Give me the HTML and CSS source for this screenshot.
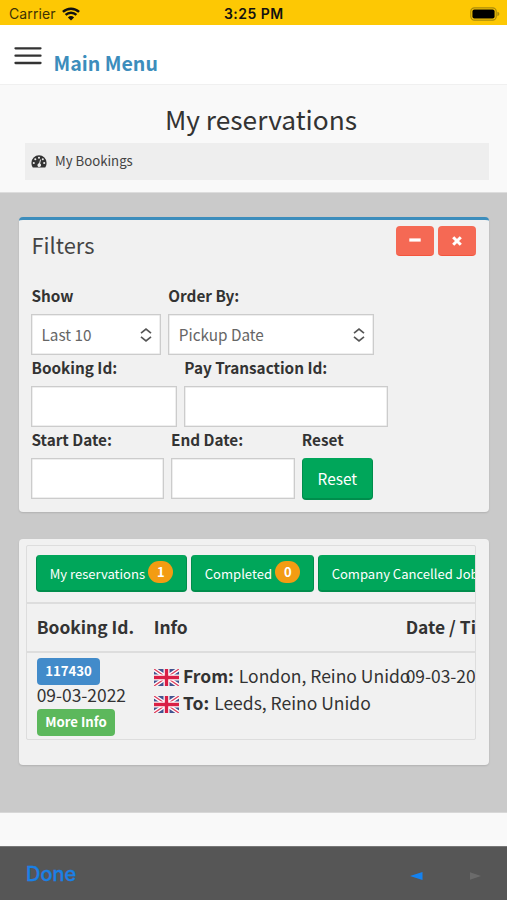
FILE: index.html
```html
<!DOCTYPE html>
<html lang="en">
<head>
<meta charset="utf-8">
<title>My reservations</title>
<link rel="stylesheet" href="styles.css">
</head>
<body>
<svg width="0" height="0" class="defs" aria-hidden="true">
  <symbol id="uk" viewBox="0 0 25 17">
    <path d="M0 0h25v17H0z" fill="#42538f"/>
    <path d="M0 0l25 17M25 0L0 17" stroke="#fff" stroke-width="4"/>
    <path d="M0 0l25 17M25 0L0 17" stroke="#df4562" stroke-width="1.4"/>
    <path d="M12.5 0v17M0 8.5h25" stroke="#fff" stroke-width="6"/>
    <path d="M12.5 0v17M0 8.5h25" stroke="#d91f45" stroke-width="3.4"/>
  </symbol>
  <symbol id="sort" viewBox="0 0 12 14">
    <path d="M1 5.2l5-4 5 4M1 8.8l5 4 5-4" fill="none" stroke="#555" stroke-width="1.7"/>
  </symbol>
</svg>
<div class="status">
  <span class="carrier">Carrier</span>
  <svg class="wifi" width="18" height="14" viewBox="0 0 18 14"><path d="M.9 4.900a11.800 11.800 0 0 1 16.200 0M3.600 7.900a7.800 7.800 0 0 1 10.800 0" fill="none" stroke="#111" stroke-width="2.400"/><path d="M9 13.600L5.900 10.400a4.600 4.600 0 0 1 6.200 0z" fill="#111"/></svg>
  <span class="clock">3:25 PM</span>
  <svg class="battery" width="30" height="14" viewBox="0 0 30 14"><rect x=".8" y=".8" width="25.4" height="12.4" rx="3.6" fill="none" stroke="#a98a0b" stroke-width="1.2"/><rect x="2.4" y="2.6" width="22.2" height="8.8" rx="2" fill="#000"/><path d="M27.4 4.8q2 .6 2 2.2t-2 2.2z" fill="#a98a0b"/></svg>
</div>
<header class="nav">
  <svg class="burger" width="28" height="20" viewBox="0 0 28 20"><path d="M1.5 3.300h25M1.500 10.700h25M1.500 18h25" stroke="#333" stroke-width="2.300" stroke-linecap="round"/></svg>
  <span class="brand">Main Menu</span>
</header>
<section class="heading">
  <h1>My reservations</h1>
  <div class="crumb">
    <svg width="16" height="13" viewBox="0 0 16 13"><path d="M8 .3A7.6 7.6 0 0 0 .4 7.9c0 1.6.4 2.9 1.1 4.1.2.4.4.5.8.5h11.4c.4 0 .6-.1.8-.5.7-1.2 1.1-2.500 1.100-4.100A7.600 7.600 0 0 0 8 .3z" fill="#333"/><g fill="#eee"><circle cx="2.800" cy="8" r="1.050"/><circle cx="4.300" cy="4.300" r="1.050"/><circle cx="8" cy="2.700" r="1.050"/><circle cx="11.800" cy="4.300" r="1.050"/><circle cx="13.200" cy="8" r="1.050"/><path d="M9.100 4.500l.9.250-.9 3.800a1.800 1.800 0 1 1-1-.2z"/></g></svg>
    <span>My Bookings</span>
  </div>
</section>
<main class="content">
  <section class="box filters">
    <div class="box-head">
      <h2>Filters</h2>
      <div class="tools">
        <button class="tool"><svg width="12" height="12" viewBox="0 0 12 12"><path d="M.3 5h11.400" stroke="#fff" stroke-width="3.200"/></svg></button>
        <button class="tool"><svg width="12" height="12" viewBox="0 0 12 12"><path d="M2.200 2.200l7.600 7.600M9.800 2.200L2.200 9.800" stroke="#fff" stroke-width="3"/></svg></button>
      </div>
    </div>
    <div class="row">
      <div class="field w-show"><label>Show</label><div class="control"><span>Last 10</span><svg width="12" height="14"><use href="#sort"/></svg></div></div>
      <div class="field w-order"><label>Order By:</label><div class="control"><span>Pickup Date</span><svg width="12" height="14"><use href="#sort"/></svg></div></div>
    </div>
    <div class="row">
      <div class="field w-booking"><label>Booking Id:</label><div class="control"></div></div>
      <div class="field w-pay"><label>Pay Transaction Id:</label><div class="control"></div></div>
    </div>
    <div class="row">
      <div class="field w-start"><label>Start Date:</label><div class="control"></div></div>
      <div class="field w-end"><label>End Date:</label><div class="control"></div></div>
      <div class="field w-reset"><label>Reset</label><button class="reset">Reset</button></div>
    </div>
  </section>
  <section class="box results">
    <div class="scroller">
      <div class="tabs">
        <button class="tab">My reservations <b>1</b></button>
        <button class="tab">Completed <b>0</b></button>
        <button class="tab">Company Cancelled Jobs <b>0</b></button>
      </div>
      <div class="grid thead">
        <span>Booking Id.</span><span>Info</span><span>Date / Time</span>
      </div>
      <div class="grid tbody">
        <div class="ids"><span class="label blue">117430</span><span class="date">09-03-2022</span><span class="label green">More Info</span></div>
        <div class="info">
          <div><svg width="25" height="17"><use href="#uk"/></svg><b>From:</b> London, Reino Unido</div>
          <div><svg width="25" height="17"><use href="#uk"/></svg><b>To:</b> Leeds, Reino Unido</div>
        </div>
        <div class="when">09-03-2022</div>
      </div>
    </div>
  </section>
</main>
<footer class="foot"></footer>
<div class="toolbar">
  <span class="done">Done</span>
  <svg class="prev" width="13" height="8" viewBox="0 0 13 8"><path d="M0 4L12.500 0v8z" fill="#1482f0"/></svg>
  <svg class="next" width="11" height="8" viewBox="0 0 11 8"><path d="M11 4L0 .3v7.400z" fill="#6b6b6b"/></svg>
</div>
</body>
</html>
```
FILE: styles.css
```css
* { box-sizing: border-box; }
body {
  margin: 0;
  width: 507px;
  height: 900px;
  overflow: hidden;
  display: flex;
  flex-direction: column;
  background: #f9f9f9;
  color: #333;
  font-family: "Noto Sans CJK JP", sans-serif;
}
h1, h2 { margin: 0; font-weight: 400; }
button { border: 0; padding: 0; font: inherit; color: #fff; display: flex; align-items: center; justify-content: center; }
.defs { position: absolute; }
.status {
  flex: none;
  height: 25px;
  padding: 2px 7px 0 9px;
  background: #fdc804;
  display: grid;
  grid-template-columns: 53px 18px 1fr 30px;
  align-items: center;
  font: 14px/20px Inter, sans-serif;
  color: #111;
}
.carrier { color: #3d3204; letter-spacing: .1px; }
.clock { font-weight: 600; padding-left: 144px; letter-spacing: .45px; }
.nav {
  flex: none;
  height: 60px;
  padding: 20px 0 0 14px;
  background: #fff;
  border-bottom: 1px solid #f0f0f0;
  display: flex;
  gap: 12px;
}
.brand { font-weight: 700; font-size: 19.6px; line-height: 24px; margin-top: 6px; margin-left: -.5px; color: #3c8dbc; }
.heading { flex: none; height: 108px; padding: 16px 18px 0 25px; border-bottom: 1px solid #ddd; }
h1 { font-size: 26.3px; line-height: 36px; text-align: center; padding-left: 8px; margin-bottom: 6px; }
.crumb { height: 37px; background: #eee; display: flex; align-items: center; gap: 8px; padding-left: 6px; font-size: 13.2px; color: #444; }
.crumb span { margin-top: -3px; }
.content { flex: none; height: 620px; background: #cacaca; padding: 24px 18px 0 19px; border-bottom: 1px solid #d8d8d8; }
.box { background: #f1f1f1; border-radius: 4px; box-shadow: 0 1px 2px rgba(0,0,0,.13); }
.filters { height: 295px; border-top: 3px solid #3c8dbc; padding: 0 13px 0 12px; }
.box-head { display: flex; justify-content: space-between; height: 66px; padding-top: 6px; }
h2 { font-size: 21.9px; line-height: 38px; color: #444; padding-left: .5px; }
.tools { display: flex; gap: 4px; }
.tool { width: 38px; height: 30px; background: #f56954; border-radius: 4px; border-bottom: 1px solid #f4543c; }
.row { display: flex; gap: 8px; height: 72px; }
label { display: block; font-weight: 700; font-size: 15.3px; line-height: 18px; height: 28px; padding-left: .5px; white-space: nowrap; }
.control { height: 41px; background: #fff; border: 1px solid #ccc; box-shadow: inset 0 0 0 .5px #ddd; padding: 0 8px 0 9.5px; display: flex; align-items: center; justify-content: space-between; font-size: 15.3px; color: #666; }
.control span { margin-top: -2px; }
.w-show { width: 130px; margin-right: -.7px; } .w-order { width: 206px; }
.w-booking { width: 146px; margin-right: -.7px; } .w-pay { width: 204px; }
.w-start { width: 133px; margin-right: -1px; } .w-end { width: 124px; margin-right: -1.2px; } .w-reset { width: 71px; }
.w-order label, .w-pay label, .w-end label, .w-reset label { padding-left: 0; }
.reset { width: 71px; height: 42px; background: #00a65a; border: 1px solid #008d4c; border-top: 0; border-bottom-width: 2px; border-radius: 4px; font-size: 15.4px; }
.results { margin-top: 27px; height: 226px; padding: 6px 12px 0 7px; }
.scroller { width: 450px; height: 195px; border: 1px solid #ddd; border-radius: 2px; overflow: hidden; }
.tabs { height: 56px; padding: 9px 0 0 9px; display: flex; gap: 4px; }
.tab { flex: none; height: 37px; padding: 1px 12.7px 0; gap: 3.3px; background: #00a65a; border: 1px solid #008d4c; border-top: 0; border-bottom-width: 2px; border-radius: 4px; font-size: 13.05px; white-space: nowrap; }
.tab b { width: 25px; height: 22px; margin-top: -2px; border-radius: 11px; background: #f39c12; line-height: 21px; text-align: center; font-size: 13px; }
.grid { display: grid; grid-template-columns: 117px 252px 120px; padding-left: 9.7px; white-space: nowrap; border-top: 2px solid #ddd; }
.thead { height: 49px; font-weight: 700; font-size: 17.4px; line-height: 45px; }
.tbody { height: 90px; font-size: 17.4px; line-height: 27px; }
.ids { display: flex; flex-direction: column; align-items: flex-start; padding-top: 5px; }
.label { height: 27px; padding: 0 8.5px; border-radius: 4px; color: #fff; font-weight: 700; font-size: 13.2px; line-height: 25px; }
.date { line-height: 20px; height: 24px; }
.blue { background: #428bca; } .green { background: #5cb85c; }
.info, .when { padding-top: 9px; }
.info div { display: flex; align-items: center; height: 27px; font-size: 17.5px; }
.info svg { flex: none; margin-right: 4.3px; margin-top: 3px; }
.info b { margin-right: 5px; }
.foot { height: 33px; flex: none; background: #f9f9f9; }
.toolbar { flex: 1; background: #565656; border-top: 1px solid #777; display: flex; align-items: center; padding: 0 26px; }
.done { font: 500 20px/24px Inter, sans-serif; color: #1a80e6; margin: 1px auto 0 0; -webkit-text-stroke: .3px #1a80e6; }
.prev { margin-right: 47px; margin-top: 4px; }
.next { margin-top: 4px; }
```
